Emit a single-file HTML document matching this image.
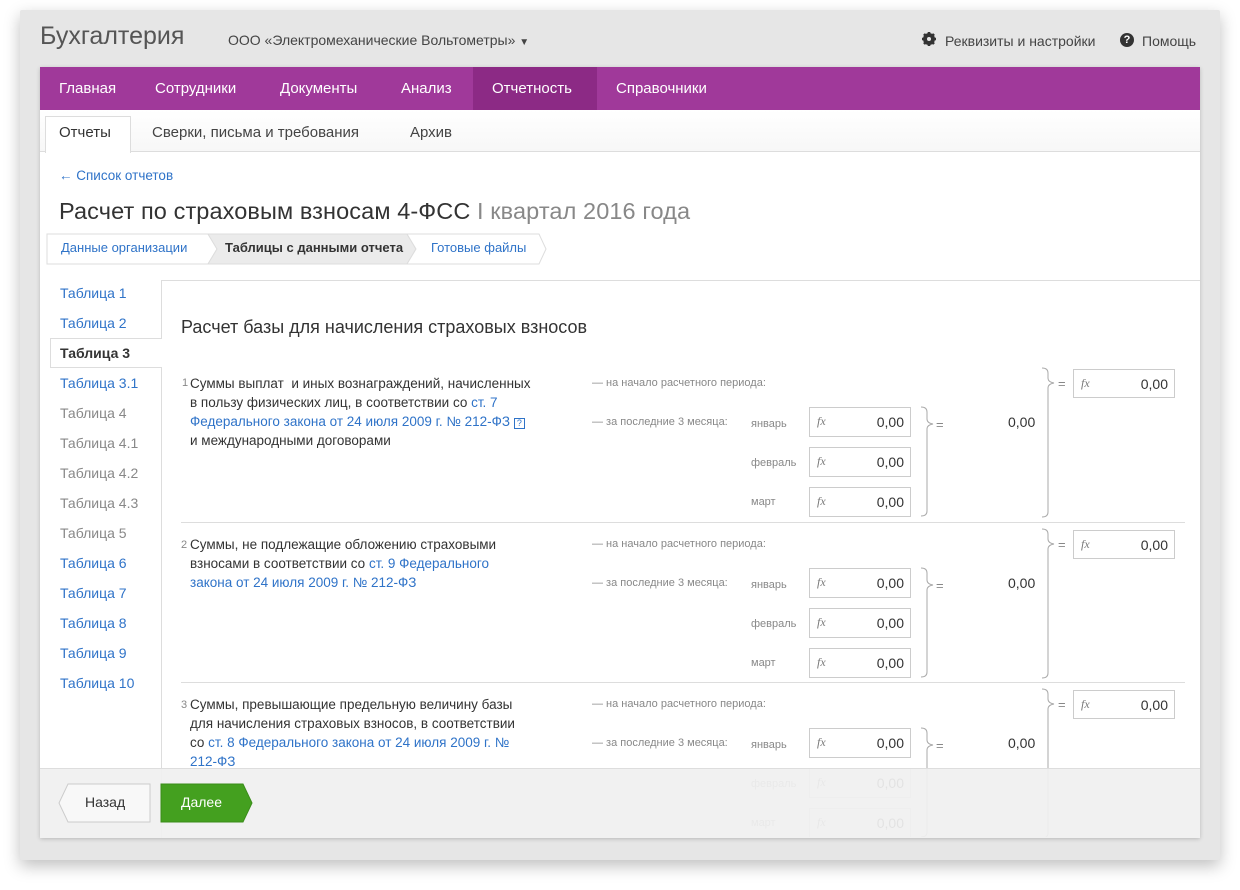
<!DOCTYPE html>
<html><head><meta charset="utf-8">
<style>
*{margin:0;padding:0;box-sizing:border-box}
html,body{width:1240px;height:890px;overflow:hidden}
body{background:#fff;font-family:"Liberation Sans","Noto Sans CJK SC",sans-serif;position:relative;color:#333}
.a{position:absolute;white-space:nowrap}
#win{position:absolute;left:20px;top:10px;width:1200px;height:850px;background:#e6e6e6;box-shadow:0 6px 16px rgba(0,0,0,.25);border-radius:2px}
#card{position:absolute;left:40px;top:67px;width:1160px;height:771px;background:#fff;overflow:hidden;box-shadow:0 1px 4px rgba(0,0,0,.2)}
.nav{position:absolute;left:0;top:0;width:1160px;height:43px;background:#a0399a}
.nav span{position:absolute;top:13px;color:#fff;font-size:15px}
.tabs{position:absolute;left:0;top:43px;width:1160px;height:42px;background:linear-gradient(#fff,#f7f7f7);border-bottom:1px solid #ddd}
.lnk{color:#2f73c8}
.lst{position:absolute;left:20px;font-size:14px}
.inp{position:absolute;width:102px;height:30px;border:1px solid #ccc;background:#fff}
.inp i{position:absolute;left:7px;top:6px;font-family:"Liberation Serif",serif;font-size:12px;color:#777}
.inp b{position:absolute;right:6px;top:6px;font-weight:normal;font-size:14px;color:#333}
.sm{font-size:11px;color:#888}
.txt{position:absolute;left:150px;font-size:13.5px;line-height:19px;color:#333;white-space:nowrap}
</style></head><body>
<div id="win">
<div class="a" style="left:20px;top:12px;font-size:25px;color:#555">Бухгалтерия</div>
<div class="a" style="left:208px;top:22px;font-size:14px;color:#444">ООО «Электромеханические Вольтометры» <span style="font-size:10px">▼</span></div>
<svg class="a" style="left:902px;top:22px" width="14" height="14" viewBox="0 0 14 14"><circle cx="7" cy="7" r="4.5" fill="none" stroke="#333" stroke-width="3"/><g stroke="#333" stroke-width="2.6"><line x1="7" y1="0" x2="7" y2="14"/><line x1="0" y1="7" x2="14" y2="7"/><line x1="2" y1="2" x2="12" y2="12"/><line x1="12" y1="2" x2="2" y2="12"/></g><circle cx="7" cy="7" r="2" fill="#e6e6e6"/></svg>
<div class="a" style="left:925px;top:23px;font-size:14px;color:#444">Реквизиты и настройки</div>
<div class="a" style="left:1100px;top:23px;width:14px;height:14px;border-radius:50%;background:#333;color:#fff;font-size:11px;font-weight:bold;text-align:center;line-height:14px">?</div>
<div class="a" style="left:1122px;top:23px;font-size:14px;color:#444">Помощь</div>
</div>
<div id="card">
<div class="nav">
<span style="left:19px">Главная</span><span style="left:115px">Сотрудники</span><span style="left:240px">Документы</span><span style="left:361px">Анализ</span>
<div class="a" style="left:433px;top:0;width:124px;height:43px;background:#8c2a85"></div>
<span style="left:452px">Отчетность</span><span style="left:576px">Справочники</span>
</div>
<div class="tabs">
<div class="a" style="left:5px;top:6px;width:86px;height:37px;background:#fff;border:1px solid #ddd;border-bottom:none"></div>
<div class="a" style="left:19px;top:14px;font-size:15px;color:#333">Отчеты</div>
<div class="a" style="left:112px;top:14px;font-size:15px;color:#444">Сверки, письма и требования</div>
<div class="a" style="left:370px;top:14px;font-size:15px;color:#444">Архив</div>
</div>
<div class="a lnk" style="left:19px;top:101px;font-size:13.5px">← Список отчетов</div>
<div class="a" style="left:19px;top:131px;font-size:23.5px;letter-spacing:0.1px;color:#333">Расчет по страховым взносам 4-ФСС <span style="color:#888">I квартал 2016 года</span></div>
<svg class="a" style="left:6px;top:166px" width="502" height="32"><path d="M1 1H162L171 16L162 31H1Z" fill="#fff" stroke="#ddd"/><path d="M162 1H361L370 16L361 31H162L171 16Z" fill="#ebebeb" stroke="#ddd"/><path d="M361 1H493L500 16L493 31H361L370 16Z" fill="#fff" stroke="#ddd"/></svg>
<div class="a lnk" style="left:21px;top:173px;font-size:13px">Данные организации</div>
<div class="a" style="left:185px;top:173px;font-size:13px;font-weight:bold;color:#333">Таблицы с данными отчета</div>
<div class="a lnk" style="left:391px;top:173px;font-size:13px">Готовые файлы</div>

<div class="a" style="left:121px;top:213px;width:1040px;height:700px;border-left:1px solid #ddd;border-top:1px solid #ddd"></div>
<div class="a" style="left:10px;top:271px;width:112px;height:30px;border:1px solid #ddd;border-right:none;background:#fff"></div>
<div class="lst lnk" style="top:218px">Таблица 1</div>
<div class="lst lnk" style="top:248px">Таблица 2</div>
<div class="lst" style="top:278px;font-weight:bold;color:#333">Таблица 3</div>
<div class="lst lnk" style="top:308px">Таблица 3.1</div>
<div class="lst" style="top:338px;color:#888">Таблица 4</div>
<div class="lst" style="top:368px;color:#888">Таблица 4.1</div>
<div class="lst" style="top:398px;color:#888">Таблица 4.2</div>
<div class="lst" style="top:428px;color:#888">Таблица 4.3</div>
<div class="lst" style="top:458px;color:#888">Таблица 5</div>
<div class="lst lnk" style="top:488px">Таблица 6</div>
<div class="lst lnk" style="top:518px">Таблица 7</div>
<div class="lst lnk" style="top:548px">Таблица 8</div>
<div class="lst lnk" style="top:578px">Таблица 9</div>
<div class="lst lnk" style="top:608px">Таблица 10</div>

<div class="a" style="left:141px;top:250px;font-size:18px;color:#333">Расчет базы для начисления страховых взносов</div>

<div class="a" style="left:0;top:300px;width:1160px;height:160px">
 <div class="a sm" style="left:142px;top:10px">1</div>
 <div class="txt" style="top:7px">Суммы выплат&nbsp; и иных вознаграждений, начисленных<br>в пользу физических лиц, в соответствии со <span class="lnk">ст. 7</span><br><span class="lnk">Федерального закона от 24 июля 2009 г. № 212-ФЗ</span> <span style="display:inline-block;width:11px;height:11px;border:1px solid #2f73c8;font-size:9px;line-height:9px;text-align:center;color:#2f73c8">?</span><br>и международными договорами</div>
</div>
<div class="a" style="left:0;top:460px;width:1160px;height:160px">
 <div class="a sm" style="left:141px;top:12px">2</div>
 <div class="txt" style="top:8px">Суммы, не подлежащие обложению страховыми<br>взносами в соответствии со <span class="lnk">ст. 9 Федерального</span><br><span class="lnk">закона от 24 июля 2009 г. № 212-ФЗ</span></div>
</div>
<div class="a" style="left:0;top:620px;width:1160px;height:160px">
 <div class="a sm" style="left:141px;top:12px">3</div>
 <div class="txt" style="top:8px">Суммы, превышающие предельную величину базы<br>для начисления страховых взносов, в соответствии<br>со <span class="lnk">ст. 8 Федерального закона от 24 июля 2009 г. №</span><br><span class="lnk">212-ФЗ</span></div>
</div>

<div class="a" style="left:0;top:300px;width:1160px;height:160px">
 <div class="a sm" style="left:552px;top:10px">— на начало расчетного периода:</div>
 <div class="a sm" style="left:552px;top:49px">— за последние 3 месяца:</div>
 <div class="a sm" style="left:711px;top:51px">январь</div><div class="a sm" style="left:711px;top:90px">февраль</div><div class="a sm" style="left:711px;top:129px">март</div>
 <div class="inp" style="left:769px;top:40px"><i>fx</i><b>0,00</b></div>
 <div class="inp" style="left:769px;top:80px"><i>fx</i><b>0,00</b></div>
 <div class="inp" style="left:769px;top:120px"><i>fx</i><b>0,00</b></div>
 <svg class="a" style="left:879px;top:39px" width="16" height="112"><path d="M2 1Q8 1 8 6V13Q8 17 14 18Q8 19 8 23V105Q8 110 2 110" fill="none" stroke="#aaa"/></svg>
 <div class="a sm" style="left:896px;top:50px;font-size:13px">=</div>
 <div class="a" style="left:968px;top:47px;font-size:14px">0,00</div>
 <svg class="a" style="left:1000px;top:0px" width="16" height="151"><path d="M2 1Q8 1 8 6V11Q8 15 14 16Q8 17 8 21V145Q8 150 2 150" fill="none" stroke="#aaa"/></svg>
 <div class="a sm" style="left:1018px;top:9px;font-size:13px">=</div>
 <div class="inp" style="left:1033px;top:2px;height:29px"><i>fx</i><b>0,00</b></div>
 <div class="a" style="left:141px;top:155px;width:1004px;border-top:1px solid #ddd"></div>
</div>
<div class="a" style="left:0;top:460px;width:1160px;height:160px">
 <div class="a sm" style="left:552px;top:11px">— на начало расчетного периода:</div>
 <div class="a sm" style="left:552px;top:50px">— за последние 3 месяца:</div>
 <div class="a sm" style="left:711px;top:52px">январь</div><div class="a sm" style="left:711px;top:91px">февраль</div><div class="a sm" style="left:711px;top:130px">март</div>
 <div class="inp" style="left:769px;top:41px"><i>fx</i><b>0,00</b></div>
 <div class="inp" style="left:769px;top:81px"><i>fx</i><b>0,00</b></div>
 <div class="inp" style="left:769px;top:121px"><i>fx</i><b>0,00</b></div>
 <svg class="a" style="left:879px;top:40px" width="16" height="112"><path d="M2 1Q8 1 8 6V13Q8 17 14 18Q8 19 8 23V105Q8 110 2 110" fill="none" stroke="#aaa"/></svg>
 <div class="a sm" style="left:896px;top:51px;font-size:13px">=</div>
 <div class="a" style="left:968px;top:48px;font-size:14px">0,00</div>
 <svg class="a" style="left:1000px;top:1px" width="16" height="151"><path d="M2 1Q8 1 8 6V11Q8 15 14 16Q8 17 8 21V145Q8 150 2 150" fill="none" stroke="#aaa"/></svg>
 <div class="a sm" style="left:1018px;top:10px;font-size:13px">=</div>
 <div class="inp" style="left:1033px;top:3px;height:29px"><i>fx</i><b>0,00</b></div>
 <div class="a" style="left:141px;top:155px;width:1004px;border-top:1px solid #ddd"></div>
</div>
<div class="a" style="left:0;top:620px;width:1160px;height:150px;overflow:hidden">
 <div class="a sm" style="left:552px;top:11px">— на начало расчетного периода:</div>
 <div class="a sm" style="left:552px;top:50px">— за последние 3 месяца:</div>
 <div class="a sm" style="left:711px;top:52px">январь</div><div class="a sm" style="left:711px;top:91px">февраль</div><div class="a sm" style="left:711px;top:130px">март</div>
 <div class="inp" style="left:769px;top:41px"><i>fx</i><b>0,00</b></div>
 <div class="inp" style="left:769px;top:81px"><i>fx</i><b>0,00</b></div>
 <div class="inp" style="left:769px;top:121px"><i>fx</i><b>0,00</b></div>
 <svg class="a" style="left:879px;top:40px" width="16" height="112"><path d="M2 1Q8 1 8 6V13Q8 17 14 18Q8 19 8 23V105Q8 110 2 110" fill="none" stroke="#aaa"/></svg>
 <div class="a sm" style="left:896px;top:51px;font-size:13px">=</div>
 <div class="a" style="left:968px;top:48px;font-size:14px">0,00</div>
 <svg class="a" style="left:1000px;top:1px" width="16" height="151"><path d="M2 1Q8 1 8 6V11Q8 15 14 16Q8 17 8 21V145Q8 150 2 150" fill="none" stroke="#aaa"/></svg>
 <div class="a sm" style="left:1018px;top:10px;font-size:13px">=</div>
 <div class="inp" style="left:1033px;top:3px;height:29px"><i>fx</i><b>0,00</b></div>
</div>

<div class="a" style="left:0;top:701px;width:1160px;height:70px;background:rgba(240,240,240,.93);border-top:1px solid #ddd"></div>
<svg class="a" style="left:18px;top:716px" width="94" height="40"><path d="M10 1H92V39H10L1 20Z" fill="#f8f8f8" stroke="#ccc"/></svg>
<div class="a" style="left:45px;top:727px;font-size:14px;color:#333">Назад</div>
<svg class="a" style="left:120px;top:716px" width="94" height="40"><path d="M1 1H83L92 20L83 39H1Z" fill="#44a01f" stroke="#3a8d1a"/></svg>
<div class="a" style="left:141px;top:727px;font-size:14px;color:#fff">Далее</div>
</div>
</body></html>
